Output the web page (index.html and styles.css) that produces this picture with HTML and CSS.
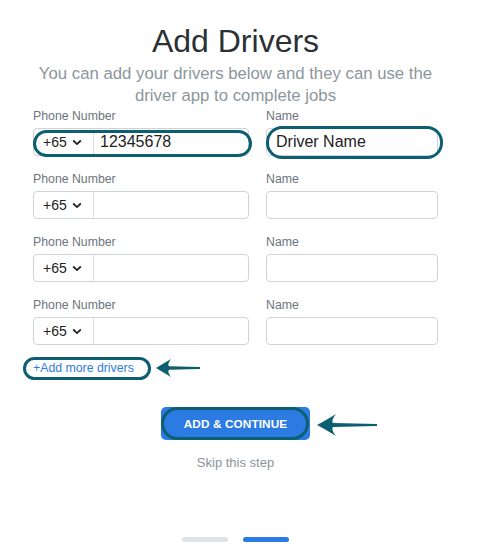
FILE: index.html
```html
<!DOCTYPE html>
<html lang="en">
<head>
	<meta charset="UTF-8">
	<meta name="viewport" content="width=device-width, initial-scale=1.0">
	<title>Add Drivers</title>
	<link rel="stylesheet" href="styles.css">
</head>
<body>
	<div class="page">
		<h1>Add Drivers</h1>
		<p class="lead">You can add your drivers below and they can use the driver app to complete jobs</p>

		<div class="drivers">
			<div class="driver-row">
				<div class="field">
					<label>Phone Number</label>
					<div class="phone-group marked">
						<span class="prefix">+65 <svg class="chevron" width="10" height="7" viewBox="0 0 10 7"><path d="M1.2 1.5l3.8 3.6 3.8-3.6" fill="none" stroke="#222" stroke-width="1.8"/></svg></span>
						<input type="tel" value="12345678">
					</div>
				</div>
				<div class="field">
					<label>Name</label>
					<div class="name-wrap marked">
						<input type="text" class="name-input" value="Driver Name">
					</div>
				</div>
			</div>

			<div class="driver-row">
				<div class="field">
					<label>Phone Number</label>
					<div class="phone-group">
						<span class="prefix">+65 <svg class="chevron" width="10" height="7" viewBox="0 0 10 7"><path d="M1.2 1.5l3.8 3.6 3.8-3.6" fill="none" stroke="#222" stroke-width="1.8"/></svg></span>
						<input type="tel">
					</div>
				</div>
				<div class="field">
					<label>Name</label>
					<input type="text" class="name-input">
				</div>
			</div>

			<div class="driver-row">
				<div class="field">
					<label>Phone Number</label>
					<div class="phone-group">
						<span class="prefix">+65 <svg class="chevron" width="10" height="7" viewBox="0 0 10 7"><path d="M1.2 1.5l3.8 3.6 3.8-3.6" fill="none" stroke="#222" stroke-width="1.8"/></svg></span>
						<input type="tel">
					</div>
				</div>
				<div class="field">
					<label>Name</label>
					<input type="text" class="name-input">
				</div>
			</div>

			<div class="driver-row">
				<div class="field">
					<label>Phone Number</label>
					<div class="phone-group">
						<span class="prefix">+65 <svg class="chevron" width="10" height="7" viewBox="0 0 10 7"><path d="M1.2 1.5l3.8 3.6 3.8-3.6" fill="none" stroke="#222" stroke-width="1.8"/></svg></span>
						<input type="tel">
					</div>
				</div>
				<div class="field">
					<label>Name</label>
					<input type="text" class="name-input">
				</div>
			</div>
		</div>

		<div class="add-more-row">
			<a href="#" class="add-more">+Add more drivers</a>
			<svg class="arrow" width="44" height="18" viewBox="0 0 44 18"><path d="M0 9C5 6 10 3 15 0C12 4 12 6 13 7.2L44 8L44 10L13 10.8C12 12 12 14 15 18C10 15 5 12 0 9Z" fill="#0b5f71"/></svg>
		</div>

		<div class="actions">
			<div class="submit-wrap">
				<button type="button" class="submit">ADD &amp; CONTINUE</button>
				<svg class="arrow arrow-big" width="60" height="22" viewBox="0 0 60 22"><path d="M0 11C7 7 13 4 19 0C15 5 15 7.5 16 9L60 10L60 12L16 13C15 14.5 15 17 19 22C13 18 7 15 0 11Z" fill="#0b5f71"/></svg>
			</div>
			<a href="#" class="skip">Skip this step</a>
		</div>

		<div class="steps">
			<span class="step"></span>
			<span class="step active"></span>
		</div>
	</div>
</body>
</html>
```

FILE: styles.css
```css
body {
	margin: 0;
	font-family: "Liberation Sans", Arial, sans-serif;
	background: #fff;
	color: #222;
}

.page {
	width: 405px;
	margin-left: 33px;
	padding-top: 23px;
}

h1 {
	margin: 0;
	font-size: 32px;
	line-height: 36px;
	font-weight: normal;
	text-align: center;
	color: #2b3035;
}

.lead {
	margin: 4px 0 2px;
	font-size: 16.75px;
	line-height: 22px;
	text-align: center;
	color: #8c969c;
}

.drivers {
	display: grid;
	row-gap: 16px;
}

.driver-row {
	display: grid;
	grid-template-columns: 216px 172px;
	column-gap: 17px;
}

.field label {
	display: block;
	font-size: 12.3px;
	line-height: 15px;
	color: #6c757d;
	margin-bottom: 4px;
}

.phone-group {
	display: flex;
	height: 28px;
	border: 1px solid #ced4da;
	border-radius: 4px;
	box-sizing: border-box;
}

.prefix {
	display: flex;
	align-items: center;
	width: 60px;
	padding-left: 9px;
	box-sizing: border-box;
	border-right: 1px solid #dee2e6;
	font-size: 14px;
	color: #222;
}

.chevron {
	margin-left: 5px;
}

.phone-group input {
	flex: 1;
	min-width: 0;
	border: none;
	outline: none;
	padding: 0 6px;
	font-family: inherit;
	font-size: 16px;
	color: #222;
	background: transparent;
}

.name-input {
	display: block;
	width: 100%;
	height: 28px;
	box-sizing: border-box;
	border: 1px solid #ced4da;
	border-radius: 4px;
	padding: 0 9px;
	font-family: inherit;
	font-size: 16px;
	color: #222;
	outline: none;
}

/* annotation marks */
.marked {
	position: relative;
}

.marked::after {
	content: "";
	position: absolute;
	top: 1px;
	bottom: -2px;
	left: -1px;
	right: -4px;
	border: 3px solid #0b5f71;
	border-radius: 14px;
	pointer-events: none;
}

.name-wrap.marked::after {
	top: -2px;
	bottom: -3px;
	left: 0;
	right: -5px;
	border-radius: 16px;
}

.add-more-row {
	display: flex;
	align-items: center;
	margin-top: 14px;
}

.add-more {
	position: relative;
	font-size: 12.3px;
	line-height: 15px;
	color: #2f7de1;
	text-decoration: none;
}

.add-more::after {
	content: "";
	position: absolute;
	top: -4px;
	bottom: -4px;
	left: -10px;
	right: -17px;
	border: 3px solid #0b5f71;
	border-radius: 12px;
}

.arrow {
	margin-left: 22px;
}

.actions {
	display: flex;
	flex-direction: column;
	align-items: center;
	margin-top: 30px;
}

.submit-wrap {
	position: relative;
}

.submit {
	display: block;
	width: 149px;
	height: 33px;
	border: none;
	border-radius: 5px;
	background: #2b7be3;
	color: #fff;
	font-family: inherit;
	font-size: 11.8px;
	font-weight: bold;
	letter-spacing: 0.1px;
	cursor: pointer;
}

.submit-wrap::after {
	content: "";
	position: absolute;
	top: 0;
	bottom: 0;
	left: 0;
	right: 1px;
	border: 3px solid #0b5f71;
	border-radius: 17px;
}

.arrow-big {
	position: absolute;
	left: calc(100% + 7px);
	top: 7px;
	margin: 0;
}

.skip {
	margin-top: 15px;
	font-size: 13px;
	line-height: 16px;
	color: #8a949b;
	text-decoration: none;
}

.steps {
	display: flex;
	justify-content: center;
	gap: 15px;
	margin-top: 66px;
}

.step {
	width: 46px;
	height: 5px;
	border-radius: 3px;
	background: #dde3e6;
}

.step.active {
	background: #2b7be3;
}
```
